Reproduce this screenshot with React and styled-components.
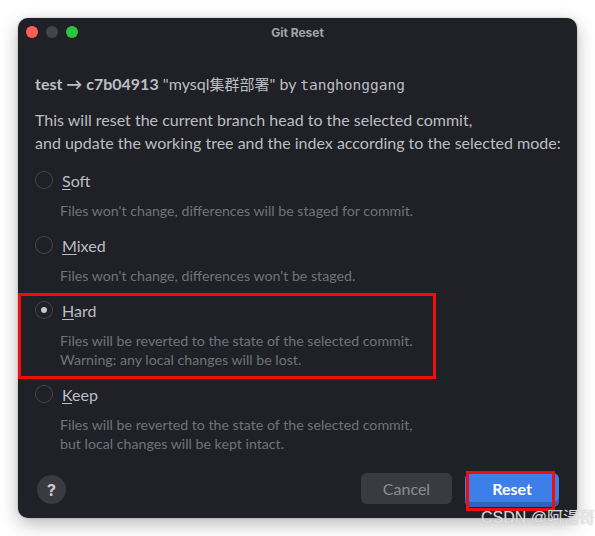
import React from "react";
import styled, { createGlobalStyle } from "styled-components";

const GlobalStyle = createGlobalStyle`
  html, body { margin: 0; padding: 0; background: #ffffff; }
  body { font-family: "Lato", "Noto Sans CJK SC", sans-serif; }
`;

const Page = styled.div`
  position: relative;
  width: 595px;
  height: 536px;
  padding: 18px;
  box-sizing: border-box;
  overflow: hidden;
`;

const Window = styled.div`
  width: 559px;
  height: 500px;
  border-radius: 10px;
  background: #1f2126;
  box-shadow: 0 6px 18px rgba(0, 0, 0, 0.28), 0 0 2px rgba(0, 0, 0, 0.3);
  display: flex;
  flex-direction: column;
  box-sizing: border-box;
`;

const TitleBar = styled.div`
  height: 28px;
  display: grid;
  grid-template-columns: 80px 1fr 80px;
  align-items: center;
`;

const Lights = styled.div`
  display: flex;
  gap: 8px;
  padding-left: 8px;
`;

const Light = styled.span`
  width: 12px;
  height: 12px;
  border-radius: 50%;
  background: ${(p) => p.$color};
`;

const Title = styled.div`
  text-align: center;
  font-family: "Inter", "Liberation Sans", sans-serif;
  font-weight: 700;
  font-size: 12px;
  color: #a3a6ab;
`;

const Content = styled.div`
  padding: 0 17px;
  flex: 1;
  color: #bcbec4;
`;

const Header = styled.div`
  margin-top: 28px;
  font-size: 16px;
  line-height: 20px;
  white-space: nowrap;
`;

const Bold = styled.span`
  font-weight: 700;
`;

const Cjk = styled.span`
  font-family: "Noto Sans CJK SC", sans-serif;
  font-size: 15px;
`;

const Mono = styled.span`
  font-family: "DejaVu Sans Mono", monospace;
  font-size: 14.5px;
`;

const Intro = styled.p`
  margin: 13px 0 0;
  font-size: 16px;
  line-height: 23px;
  white-space: nowrap;
`;

const Options = styled.div`
  margin-top: 16px;
  display: flex;
  flex-direction: column;
`;

const Option = styled.div`
  position: relative;
  height: ${(p) => 65 + (p.$lines - 1) * 19}px;
  ${(p) =>
    p.$highlight &&
    `
    &::after {
      content: "";
      position: absolute;
      left: -17px;
      top: -7px;
      width: 418px;
      height: 86px;
      border: 3px solid #f20d0d;
      box-sizing: border-box;
      pointer-events: none;
    }
  `}
`;

const Row = styled.label`
  display: flex;
  align-items: center;
  gap: 9px;
  height: 20px;
`;

const Radio = styled.span`
  width: 18px;
  height: 18px;
  border-radius: 50%;
  border: 1px solid #43464c;
  box-sizing: border-box;
  background: #1f2126;
  display: flex;
  align-items: center;
  justify-content: center;
  &::after {
    content: "";
    width: 6px;
    height: 6px;
    border-radius: 50%;
    background: ${(p) => (p.$checked ? "#c5c7cc" : "transparent")};
  }
`;

const Label = styled.span`
  font-size: 16px;
  color: #bcbec4;
`;

const Mnemonic = styled.span`
  text-decoration: underline;
  text-underline-offset: 2px;
`;

const Desc = styled.div`
  margin-top: 11px;
  padding-left: 25px;
  font-size: 14.2px;
  line-height: 19px;
  color: #70747b;
  white-space: nowrap;
`;

const Footer = styled.div`
  display: flex;
  align-items: flex-start;
  padding: 0 18px 11px 19px;
  gap: 13px;
`;

const Help = styled.button`
  width: 29px;
  height: 29px;
  margin-top: 2px;
  border-radius: 50%;
  border: none;
  background: #393b40;
  color: #c9cbd0;
  font-family: "Inter", sans-serif;
  font-weight: 700;
  font-size: 16px;
  padding: 0;
  margin-right: auto;
`;

const Button = styled.button`
  position: relative;
  width: ${(p) => (p.$primary ? 94 : 91)}px;
  height: ${(p) => (p.$primary ? 34 : 31)}px;
  border-radius: 6px;
  border: none;
  font-family: "Lato", sans-serif;
  font-size: 16px;
  font-weight: ${(p) => (p.$primary ? 700 : 400)};
  color: ${(p) => (p.$primary ? "#ffffff" : "#8a8d93")};
  background: ${(p) => (p.$primary ? "#3d7ee9" : "#393b40")};
  box-shadow: ${(p) => (p.$primary ? "inset 0 -5px 0 #3262b8" : "none")};
  padding: 0 0 ${(p) => (p.$primary ? 3 : 0)}px;
  ${(p) =>
    p.$primary &&
    `
    &::after {
      content: "";
      position: absolute;
      left: 1px;
      top: -2px;
      width: 89px;
      height: 40px;
      border: 3px solid #f20d0d;
      box-sizing: border-box;
    }
  `}
`;

const Watermark = styled.div`
  position: absolute;
  right: 0px;
  bottom: 8px;
  font-family: "Liberation Sans", "Noto Sans CJK SC", sans-serif;
  font-size: 16px;
  color: rgba(235, 235, 235, 0.9);
  text-shadow: 0 0 1px rgba(120, 120, 120, 0.5);
  white-space: nowrap;
`;

const options = [
  { key: "S", rest: "oft", lines: ["Files won't change, differences will be staged for commit."] },
  { key: "M", rest: "ixed", lines: ["Files won't change, differences won't be staged."] },
  {
    key: "H",
    rest: "ard",
    checked: true,
    highlight: true,
    lines: ["Files will be reverted to the state of the selected commit.", "Warning: any local changes will be lost."],
  },
  {
    key: "K",
    rest: "eep",
    lines: ["Files will be reverted to the state of the selected commit,", "but local changes will be kept intact."],
  },
];

export default function App() {
  return (
    <>
      <GlobalStyle />
      <Page>
        <Window>
          <TitleBar>
            <Lights>
              <Light $color="#fe5f57" />
              <Light $color="#43454a" />
              <Light $color="#29c440" />
            </Lights>
            <Title>Git Reset</Title>
            <span />
          </TitleBar>
          <Content>
            <Header>
              <Bold>test → c7b04913</Bold> "mysql<Cjk>集群部署</Cjk>" by <Mono>tanghonggang</Mono>
            </Header>
            <Intro>
              This will reset the current branch head to the selected commit,
              <br />
              and update the working tree and the index according to the selected mode:
            </Intro>
            <Options>
              {options.map((o) => (
                <Option key={o.key} $lines={o.lines.length} $highlight={o.highlight}>
                  <Row>
                    <Radio $checked={o.checked} />
                    <Label>
                      <Mnemonic>{o.key}</Mnemonic>
                      {o.rest}
                    </Label>
                  </Row>
                  <Desc>
                    {o.lines.map((l, i) => (
                      <div key={i}>{l}</div>
                    ))}
                  </Desc>
                </Option>
              ))}
            </Options>
          </Content>
          <Footer>
            <Help>?</Help>
            <Button>Cancel</Button>
            <Button $primary>Reset</Button>
          </Footer>
        </Window>
        <Watermark>CSDN @阿湯哥</Watermark>
      </Page>
    </>
  );
}
